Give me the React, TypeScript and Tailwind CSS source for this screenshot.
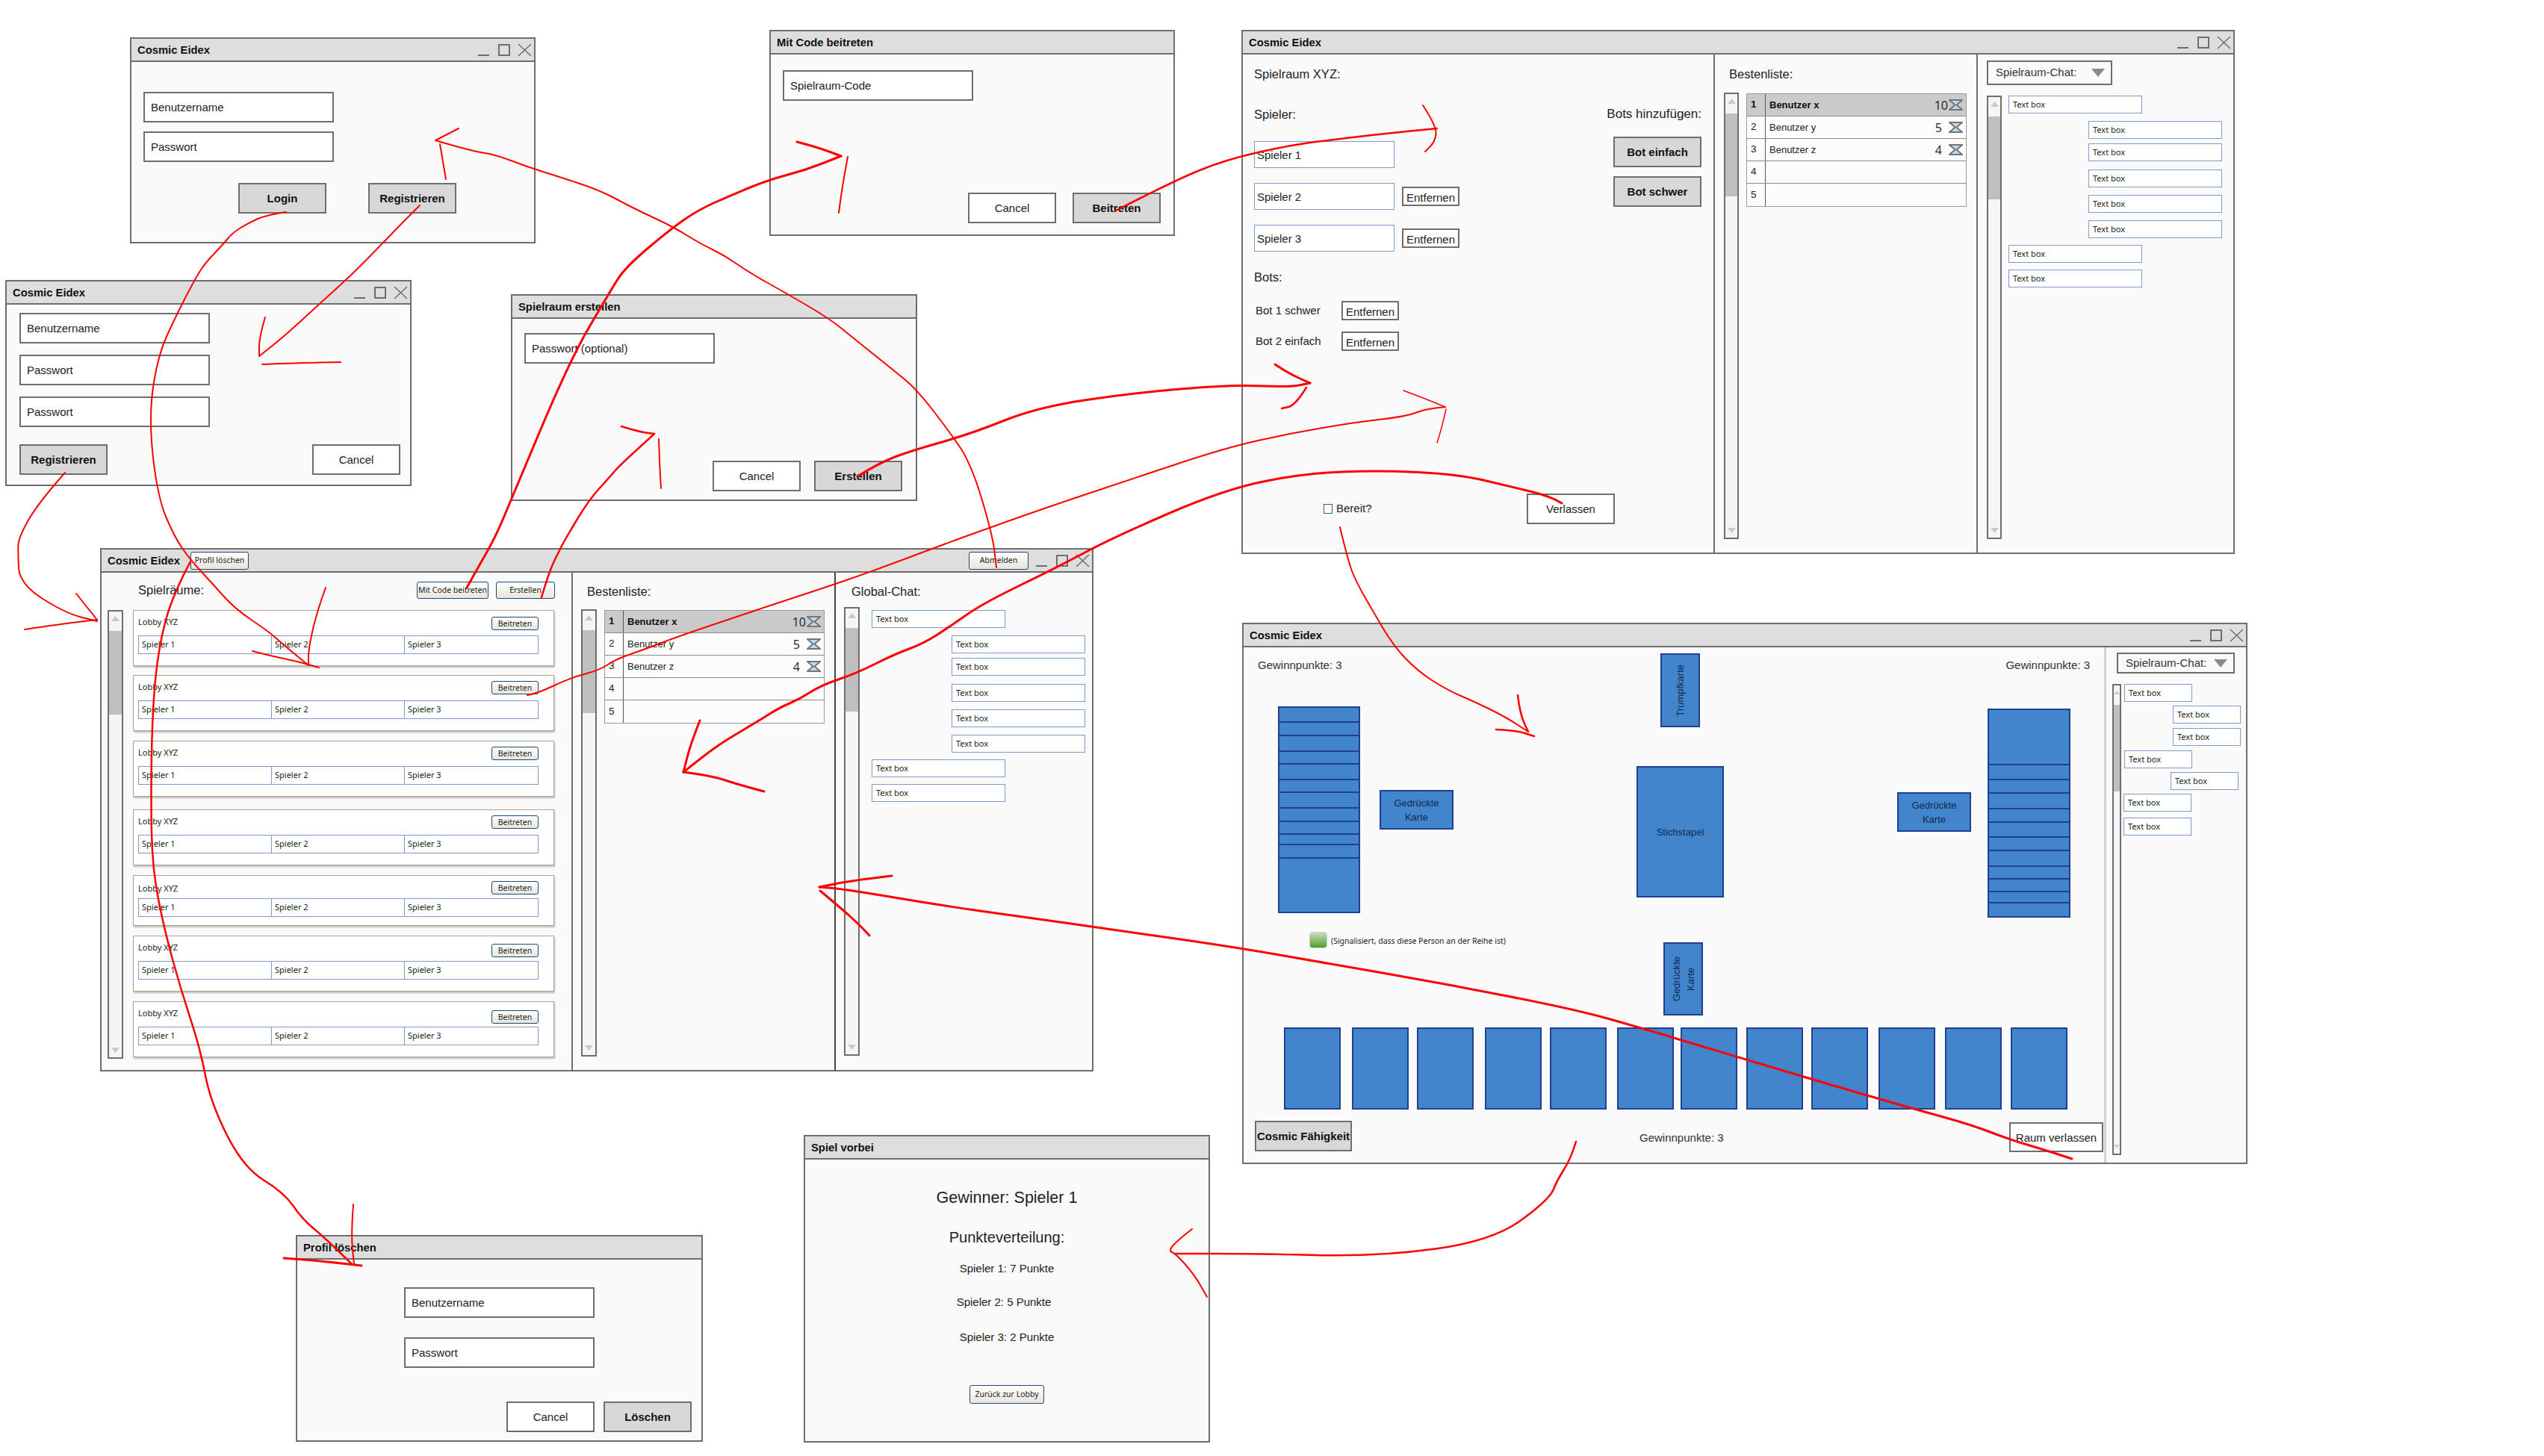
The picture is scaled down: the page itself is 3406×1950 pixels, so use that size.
import type { ReactNode } from "react";

// hand drawn red arrows, all in page pixels
const strokes: { w: number; pts: number[][] }[] = [
  { w: 2, pts: [[383, 284], [356, 288], [332, 299], [311, 312], [298, 328], [274, 353], [261, 374], [236, 422], [211, 477], [199, 560], [211, 666], [234, 720], [255, 750], [283, 780], [314, 815], [360, 846], [380, 864], [413, 891]] },
  { w: 2, pts: [[436, 787], [424, 820], [413, 869], [413, 891]] },
  { w: 2, pts: [[338, 872], [365, 879], [395, 885], [427, 894]] },
  { w: 2.5, pts: [[255, 752], [230, 799], [212, 869], [204, 953], [202, 1069], [204, 1162], [219, 1241], [242, 1325], [268, 1404], [282, 1477], [326, 1564], [380, 1597], [405, 1633], [434, 1657], [471, 1693]] },
  { w: 2, pts: [[473, 1613], [470, 1653], [474, 1693]] },
  { w: 3, pts: [[380, 1685], [421, 1688], [484, 1695]] },
  { w: 2, pts: [[562, 275], [539, 298], [514, 324], [472, 367], [431, 404], [381, 450], [347, 477]] },
  { w: 2, pts: [[355, 425], [347, 452], [347, 477]] },
  { w: 2, pts: [[351, 488], [400, 486], [456, 485]] },
  { w: 2, pts: [[87, 633], [50, 675], [25, 720], [24, 738], [26, 782], [87, 821], [130, 832]] },
  { w: 2, pts: [[102, 795], [118, 815], [130, 830]] },
  { w: 2, pts: [[33, 843], [80, 836], [130, 830]] },
  { w: 3, pts: [[625, 787], [640, 760], [663, 720], [684, 670], [763, 482], [817, 390], [837, 358], [900, 305], [937, 280], [978, 262], [1028, 241], [1078, 228], [1126, 209]] },
  { w: 3, pts: [[1067, 190], [1094, 197], [1126, 209]] },
  { w: 2, pts: [[1135, 210], [1128, 248], [1123, 285]] },
  { w: 2.5, pts: [[725, 800], [735, 766], [748, 739], [758, 720], [788, 670], [817, 638], [829, 624], [876, 581]] },
  { w: 2.5, pts: [[832, 571], [854, 578], [876, 581]] },
  { w: 2, pts: [[882, 588], [883, 620], [885, 654]] },
  { w: 2, pts: [[614, 172], [583, 188]] },
  { w: 2, pts: [[589, 193], [597, 240]] },
  { w: 2, pts: [[583, 188], [630, 202], [663, 207], [705, 223], [746, 236], [804, 255], [846, 278], [900, 303], [937, 326], [970, 342], [1003, 365], [1053, 393], [1111, 427], [1144, 454], [1194, 494], [1227, 521], [1268, 574], [1300, 620], [1329, 717], [1334, 760]] },
  { w: 3, pts: [[1148, 638], [1177, 620], [1219, 604], [1300, 581], [1390, 545], [1520, 526], [1640, 516], [1694, 517], [1729, 518], [1754, 513]] },
  { w: 3, pts: [[1707, 488], [1725, 500], [1754, 513]] },
  { w: 2.5, pts: [[1749, 519], [1734, 543], [1716, 547]] },
  { w: 2.5, pts: [[1494, 282], [1570, 243], [1640, 214], [1729, 194], [1801, 185], [1863, 178], [1924, 172]] },
  { w: 2, pts: [[1905, 141], [1924, 170], [1921, 190], [1908, 203]] },
  { w: 2, pts: [[706, 931], [719, 929], [763, 908], [804, 897], [824, 883], [865, 869], [906, 853], [1010, 818], [1052, 804], [1104, 787], [1165, 766], [1245, 736], [1288, 720], [1400, 680], [1520, 640], [1640, 600], [1729, 580], [1818, 565], [1881, 558], [1908, 548], [1935, 545]] },
  { w: 1.5, pts: [[1879, 523], [1908, 534], [1935, 545]] },
  { w: 1.5, pts: [[1936, 548], [1931, 570], [1924, 593]] },
  { w: 3, pts: [[2091, 674], [2077, 665], [2024, 652], [1952, 635], [1845, 630], [1747, 634], [1640, 655], [1490, 720], [1411, 762], [1316, 808], [1269, 841], [1236, 862], [1198, 876], [1146, 902], [1099, 918], [1071, 936], [1043, 948], [1010, 969], [962, 997], [915, 1034]] },
  { w: 3, pts: [[937, 965], [925, 995], [915, 1034]] },
  { w: 3, pts: [[915, 1034], [953, 1039], [986, 1050], [1023, 1060]] },
  { w: 2, pts: [[1794, 706], [1805, 752], [1816, 780], [1839, 820], [1865, 864], [1897, 898], [1937, 924], [1977, 941], [2017, 961], [2046, 980]] },
  { w: 2.5, pts: [[2032, 931], [2035, 956], [2046, 980]] },
  { w: 2.5, pts: [[2003, 977], [2029, 978], [2054, 986]] },
  { w: 3, pts: [[2774, 1552], [2741, 1541], [2693, 1527], [2638, 1506], [2569, 1487], [2500, 1467], [2482, 1462], [2327, 1416], [2195, 1376], [2109, 1352], [1937, 1318], [1765, 1288], [1650, 1268], [1490, 1245], [1363, 1227], [1269, 1214], [1132, 1191], [1097, 1188]] },
  { w: 3, pts: [[1194, 1173], [1142, 1179], [1097, 1188]] },
  { w: 3, pts: [[1098, 1193], [1128, 1218], [1151, 1239], [1164, 1253]] },
  { w: 2.5, pts: [[2110, 1529], [2103, 1552], [2085, 1580], [2074, 1607], [1998, 1662], [1846, 1683], [1680, 1679], [1574, 1679]] },
  { w: 2, pts: [[1596, 1646], [1578, 1660], [1564, 1675], [1574, 1679], [1599, 1707], [1616, 1737]] },
];

function smooth(pts: number[][]) {
  let d = `M${pts[0][0]} ${pts[0][1]}`;
  for (let i = 1; i < pts.length - 1; i++) {
    const mx = (pts[i][0] + pts[i + 1][0]) / 2;
    const my = (pts[i][1] + pts[i + 1][1]) / 2;
    d += ` Q${pts[i][0]} ${pts[i][1]} ${mx} ${my}`;
  }
  const last = pts[pts.length - 1];
  return d + ` L${last[0]} ${last[1]}`;
}

const WinControls = () => (
  <svg width="72" height="18" viewBox="0 0 72 18" fill="none" stroke="#6e6e6e" className="shrink-0">
    <line x1="0" y1="16" x2="15" y2="16" strokeWidth="2" />
    <rect x="28" y="2" width="14" height="14" strokeWidth="2" />
    <path d="M54 1 L71 17 M71 1 L54 17" strokeWidth="1.5" />
  </svg>
);

const Win = ({ title, className, controls, children, titleExtra }: { title: string; className: string; controls?: boolean; children: ReactNode; titleExtra?: ReactNode }) => (
  <section className={`absolute flex flex-col border-2 border-[#6e6e6e] bg-[#fafafa] ${className}`}>
    <header className="flex h-[31px] shrink-0 items-center border-b-2 border-[#6e6e6e] bg-[#dedede] pr-[3px] pl-[8px]">
      <h2 className="pt-[1px] text-[14.8px] font-bold text-[#111]">{title}</h2>
      {titleExtra}
      {controls && !titleExtra && <div className="ml-auto flex"><WinControls /></div>}
    </header>
    {children}
  </section>
);

const Field = ({ text }: { text: string }) => (
  <div className="flex h-[41px] w-[255px] items-center border-2 border-[#6e6e6e] bg-white pt-[2px] pl-[8px] text-[15px] text-[#222]">{text}</div>
);

const GrayBtn = ({ text, className = "w-[118px]" }: { text: string; className?: string }) => (
  <button className={`h-[41px] border-2 border-[#6e6e6e] bg-[#d8d8d8] pt-[2px] text-[15px] font-bold text-[#111] ${className}`}>{text}</button>
);

const PlainBtn = ({ text, className = "w-[118px] h-[41px]" }: { text: string; className?: string }) => (
  <button className={`border-2 border-[#6e6e6e] bg-white pt-[2px] text-[15px] text-[#222] ${className}`}>{text}</button>
);

const BlueBtn = ({ text, className }: { text: string; className: string }) => (
  <button className={`rounded-[3px] border border-[#1c4a78] bg-gradient-to-b from-white to-[#e8e5dc] font-['Noto_Sans'] text-[10.5px] leading-none whitespace-nowrap text-[#222] ${className}`}>{text}</button>
);

const Scrollbar = ({ className, thumb }: { className: string; thumb: string }) => (
  <div className={`flex shrink-0 flex-col border-2 border-[#6e6e6e] bg-[#f5f5f5] ${className}`}>
    <div className="flex h-[26px] shrink-0 justify-center pt-[6px]">
      <svg width="11" height="7" viewBox="0 0 11 7"><path d="M5.5 0 L11 7 L0 7 Z" fill="#c9c9c9" /></svg>
    </div>
    <div className={`shrink-0 bg-[#bfbfbf] ${thumb}`} />
    <div className="mt-auto flex justify-center pb-[6px]">
      <svg width="11" height="7" viewBox="0 0 11 7"><path d="M5.5 7 L11 0 L0 0 Z" fill="#c9c9c9" /></svg>
    </div>
  </div>
);

const Hourglass = () => (
  <svg width="19" height="15" viewBox="0 0 19 15" className="shrink-0">
    <path d="M1 1 H18 L10.5 7.5 L18 14 H1 L8.5 7.5 Z" fill="#b9dcf4" stroke="#757575" strokeWidth="2" />
  </svg>
);

const scoreRows = [
  { n: "1", name: "Benutzer x", pts: "10", top: true },
  { n: "2", name: "Benutzer y", pts: "5" },
  { n: "3", name: "Benutzer z", pts: "4" },
  { n: "4", name: "" },
  { n: "5", name: "" },
];

const ScoreTable = () => (
  <div className="h-fit w-[295px] border border-[#9a9a9a] bg-[#fcfcfc]">
    {scoreRows.map((r) => (
      <div key={r.n} className={`flex h-[30px] items-center border-b border-[#8a8a8a] text-[13px] last:border-b-0 ${r.top ? "bg-[#cacaca] font-bold text-[#111]" : "text-[#222]"}`}>
        <span className="flex h-full w-[25px] items-center border-r border-[#555] pl-[5px] text-[13.5px]">{r.n}</span>
        <span className="pl-[5px]">{r.name}</span>
        {r.pts && (
          <span className="ml-auto flex items-center gap-[1px] pr-[4px]">
            <span className={`font-['Open_Sans'] text-[16px] font-normal text-[#222] ${r.top ? "" : "pr-[8px]"}`}>{r.pts}</span>
            <Hourglass />
          </span>
        )}
      </div>
    ))}
  </div>
);

const chatLayout = [
  { right: false, gap: "mt-0" },
  { right: true, gap: "mt-[10px]" },
  { right: true, gap: "mt-[6px]" },
  { right: true, gap: "mt-[11px]" },
  { right: true, gap: "mt-[10px]" },
  { right: true, gap: "mt-[10px]" },
  { right: false, gap: "mt-[9px]" },
  { right: false, gap: "mt-[9px]" },
];

const ChatBox = ({ className }: { className: string }) => (
  <div className={`flex h-[24px] items-center border border-[#7f9cc9] bg-white pl-[5px] font-['Noto_Sans'] text-[11px] text-[#222] ${className}`}>Text box</div>
);

const ChatList = ({ className }: { className: string }) => (
  <div className={`flex flex-col ${className}`}>
    {chatLayout.map((c, i) => (
      <ChatBox key={i} className={`w-[179px] ${c.gap} ${c.right ? "ml-[107px]" : ""}`} />
    ))}
  </div>
);

const ChatSelect = ({ className }: { className: string }) => (
  <div className={`flex items-center justify-between border-2 border-[#6e6e6e] bg-[#fafafa] pr-[8px] pl-[10px] text-[15px] text-[#333] ${className}`}>
    Spielraum-Chat:
    <svg width="18" height="11" viewBox="0 0 18 11"><path d="M0 0 H18 L9 11 Z" fill="#8a8a8a" /></svg>
  </div>
);

const lobbies = [
  { gap: "", label: "", btn: "mt-[1px]", compact: false },
  { gap: "mt-[12px]", label: "", btn: "", compact: false },
  { gap: "mt-[13px]", label: "", btn: "", compact: false },
  { gap: "mt-[17px]", label: "", btn: "", compact: false },
  { gap: "mt-[13px]", label: "mt-[2px]", btn: "", compact: true },
  { gap: "mt-[13px]", label: "", btn: "mt-[3px]", compact: false },
  { gap: "mt-[13px]", label: "", btn: "mt-[4px]", compact: false },
];

const LobbyCard = ({ gap, label, btn, compact }: { gap: string; label: string; btn: string; compact: boolean }) => (
  <div className={`w-[564px] border border-[#aaa493] bg-white pr-[20px] pl-[6px] font-['Noto_Sans'] text-[11px] text-[#222] shadow-[1px_2px_2px_rgba(0,0,0,0.25)] ${gap} ${compact ? "h-[68px]" : "h-[75px]"}`}>
    <div className={`flex items-start justify-between pt-[7px] ${compact ? "h-[30px]" : "h-[33px]"}`}>
      <span className={label}>Lobby XYZ</span>
      <BlueBtn text="Beitreten" className={`h-[18px] w-[63px] ${btn}`} />
    </div>
    <div className="grid h-[25px] grid-cols-3 border border-[#7f9cc9]">
      {["Spieler 1", "Spieler 2", "Spieler 3"].map((s) => (
        <span key={s} className="flex items-center border-r border-[#7f9cc9] pl-[4px] last:border-r-0">{s}</span>
      ))}
    </div>
  </div>
);

const Card = ({ className, children }: { className: string; children?: ReactNode }) => (
  <div className={`absolute flex items-center justify-center border-2 border-[#1f3f8f] bg-[#4285cc] text-center text-[13px] leading-[19px] text-[#0f2a50] ${className}`}>{children}</div>
);

const Stack = ({ className, rows }: { className: string; rows: string[] }) => (
  <div className={`absolute flex flex-col border-2 border-[#1f3f8f] bg-[#4285cc] ${className}`}>
    {rows.map((h, i) => (
      <div key={i} className={`border-b-2 border-[#1f3f8f] last:border-b-0 ${h}`} />
    ))}
  </div>
);

const leftStack = ["h-[20px]", "h-[18px]", "h-[21px]", "h-[17px]", "h-[21px]", "h-[17px]", "h-[21px]", "h-[18px]", "h-[17px]", "h-[14px]", "h-[18px]", "h-[71px]"];
const rightStack = ["h-[74px]", "h-[20px]", "h-[18px]", "h-[21px]", "h-[18px]", "h-[20px]", "h-[18px]", "h-[21px]", "h-[17px]", "h-[17px]", "h-[15px]", "h-[17px]"];
const handGaps = ["", "ml-[15px]", "ml-[11px]", "ml-[15px]", "ml-[11px]", "ml-[14px]", "ml-[9px]", "ml-[12px]", "ml-[11px]", "ml-[14px]", "ml-[13px]", "ml-[12px]"];

export default function App() {
  return (
    <div className="relative h-[1950px] w-[3406px] overflow-hidden bg-white font-['Liberation_Sans',sans-serif]">
      {/* Login */}
      <Win title="Cosmic Eidex" controls className="top-[50px] left-[174px] h-[276px] w-[543px]">
        <div className="pt-[40px] pl-[16px]">
          <div className="flex flex-col gap-[12px]">
            <Field text="Benutzername" />
            <Field text="Passwort" />
          </div>
          <div className="mt-[28px] ml-[127px] flex gap-[56px]">
            <GrayBtn text="Login" />
            <GrayBtn text="Registrieren" />
          </div>
        </div>
      </Win>

      {/* Registrieren */}
      <Win title="Cosmic Eidex" controls className="top-[375px] left-[7px] h-[276px] w-[544px]">
        <div className="pt-[11px] pr-[13px] pl-[17px]">
          <div className="flex flex-col gap-[15px]">
            <Field text="Benutzername" />
            <Field text="Passwort" />
            <Field text="Passwort" />
          </div>
          <div className="mt-[23px] flex justify-between">
            <GrayBtn text="Registrieren" />
            <PlainBtn text="Cancel" />
          </div>
        </div>
      </Win>

      {/* Mit Code */}
      <Win title="Mit Code beitreten" className="top-[40px] left-[1030px] h-[276px] w-[543px]">
        <div className="flex flex-1 flex-col pt-[21px] pr-[17px] pb-[15px] pl-[16px]">
          <Field text="Spielraum-Code" />
          <div className="mt-auto flex justify-end gap-[22px]">
            <PlainBtn text="Cancel" />
            <GrayBtn text="Beitreten" />
          </div>
        </div>
      </Win>

      {/* Spielraum erstellen */}
      <Win title="Spielraum erstellen" className="top-[394px] left-[684px] h-[277px] w-[544px]">
        <div className="flex flex-1 flex-col pt-[19px] pr-[18px] pb-[11px] pl-[16px]">
          <Field text="Passwort (optional)" />
          <div className="mt-auto flex justify-end gap-[18px]">
            <PlainBtn text="Cancel" />
            <GrayBtn text="Erstellen" />
          </div>
        </div>
      </Win>

      {/* Spielraum */}
      <Win title="Cosmic Eidex" controls className="top-[40px] left-[1662px] h-[702px] w-[1330px]">
        <div className="flex flex-1">
          <div className="flex w-[632px] flex-col border-r-2 border-[#6e6e6e] pt-[16px] pb-[38px] pl-[15px] text-[16.5px] text-[#222]">
            <p className="h-[20px] leading-[20px]">Spielraum XYZ:</p>
            <div className="mt-[34px] flex justify-between pr-[16px]">
              <div>
                <p className="h-[20px] leading-[20px]">Spieler:</p>
                <div className="mt-[26px] flex flex-col gap-[20px] text-[15px]">
                  {["Spieler 1", "Spieler 2", "Spieler 3"].map((s, i) => (
                    <div key={s} className="flex items-center gap-[10px]">
                      <div className="flex h-[36px] w-[188px] items-center border border-[#7f9cc9] bg-white pt-[2px] pl-[3px]">{s}</div>
                      {i > 0 && <PlainBtn text="Entfernen" className="h-[26px] w-[77px]" />}
                    </div>
                  ))}
                </div>
                <p className="mt-[24px] h-[20px] leading-[20px]">Bots:</p>
                <div className="mt-[22px] flex flex-col gap-[15px] text-[15px]">
                  {["Bot 1 schwer", "Bot 2 einfach"].map((b) => (
                    <div key={b} className="flex items-center pl-[2px]">
                      <span className="w-[115px]">{b}</span>
                      <PlainBtn text="Entfernen" className="h-[26px] w-[77px]" />
                    </div>
                  ))}
                </div>
              </div>
              <div className="flex flex-col items-end">
                <p className="h-[20px] text-[17px] leading-[20px]">Bots hinzufügen:</p>
                <div className="mt-[20px] flex flex-col gap-[12px]">
                  <GrayBtn text="Bot einfach" />
                  <GrayBtn text="Bot schwer" />
                </div>
              </div>
            </div>
            <div className="mt-auto flex items-center pl-[93px]">
              <div className="flex w-[272px] items-center gap-[5px] text-[15px]">
                <span className="h-[13px] w-[12px] border border-[#2f5f9f] bg-white" />
                Bereit?
              </div>
              <PlainBtn text="Verlassen" />
            </div>
          </div>
          <div className="flex w-[352px] flex-col border-r-2 border-[#6e6e6e] pt-[16px] pl-[12px]">
            <p className="ml-[7px] h-[20px] text-[16.5px] leading-[20px] text-[#222]">Bestenliste:</p>
            <div className="mt-[15px] flex gap-[10px]">
              <Scrollbar className="h-[598px] w-[20px]" thumb="h-[111px]" />
              <div className="mt-[1px]"><ScoreTable /></div>
            </div>
          </div>
          <div className="flex flex-1 flex-col pt-[8px] pl-[12px]">
            <ChatSelect className="h-[33px] w-[168px]" />
            <div className="mt-[14px] flex gap-[9px]">
              <Scrollbar className="h-[594px] w-[20px]" thumb="h-[111px]" />
              <ChatList className="" />
            </div>
          </div>
        </div>
      </Win>

      {/* Lobby */}
      <Win
        title="Cosmic Eidex"
        className="top-[734px] left-[134px] h-[701px] w-[1330px]"
        titleExtra={
          <>
            <BlueBtn text="Profil löschen" className="ml-[14px] h-[24px] w-[78px]" />
            <BlueBtn text="Abmelden" className="mr-[10px] ml-auto h-[24px] w-[80px]" />
            <WinControls />
          </>
        }
      >
        <div className="flex flex-1">
          <div className="w-[631px] border-r-2 border-[#6e6e6e] pt-[12px] pl-[8px]">
            <div className="ml-[41px] flex h-[23px] items-center justify-between pr-[22px]">
              <span className="text-[16.5px] text-[#222]">Spielräume:</span>
              <div className="flex gap-[10px]">
                <BlueBtn text="Mit Code beitreten" className="h-[23px] w-[96px]" />
                <BlueBtn text="Erstellen" className="h-[23px] w-[79px]" />
              </div>
            </div>
            <div className="mt-[15px] flex gap-[13px]">
              <Scrollbar className="h-[601px] w-[21px]" thumb="h-[112px]" />
              <div>
                {lobbies.map((l, i) => (
                  <LobbyCard key={i} {...l} />
                ))}
              </div>
            </div>
          </div>
          <div className="w-[352px] border-r-2 border-[#444] pt-[15px] pl-[11px]">
            <p className="ml-[8px] h-[20px] text-[16.5px] leading-[20px] text-[#222]">Bestenliste:</p>
            <div className="mt-[14px] flex gap-[10px]">
              <Scrollbar className="h-[599px] w-[21px]" thumb="h-[111px]" />
              <div className="mt-[1px]"><ScoreTable /></div>
            </div>
          </div>
          <div className="flex-1 pt-[15px] pl-[11px]">
            <p className="ml-[10px] h-[20px] text-[16.5px] leading-[20px] text-[#222]">Global-Chat:</p>
            <div className="mt-[11px] flex gap-[16px]">
              <Scrollbar className="h-[601px] w-[21px]" thumb="h-[112px]" />
              <ChatList className="mt-[4px]" />
            </div>
          </div>
        </div>
      </Win>

      {/* Spiel */}
      <Win title="Cosmic Eidex" controls className="top-[834px] left-[1663px] h-[725px] w-[1346px]">
        <div className="flex flex-1">
          <div className="relative w-[1155px] border-r-[3px] border-[#d4d2cc] text-[15px] text-[#333]">
            <span className="absolute top-[13px] left-[19px]">Gewinnpunkte: 3</span>
            <span className="absolute top-[13px] right-[19px]">Gewinnpunkte: 3</span>
            <Card className="top-[8px] left-[558px] h-[99px] w-[53px]">
              <span className="rotate-180 [writing-mode:vertical-rl]">Trumpfkarte</span>
            </Card>
            <Stack className="top-[79px] left-[46px] w-[110px]" rows={leftStack} />
            <Card className="top-[191px] left-[182px] h-[53px] w-[99px]">Gedrückte<br />Karte</Card>
            <Card className="top-[159px] left-[526px] h-[176px] w-[117px]">Stichstapel</Card>
            <Card className="top-[194px] left-[875px] h-[53px] w-[99px]">Gedrückte<br />Karte</Card>
            <Stack className="top-[82px] left-[996px] w-[111px]" rows={rightStack} />
            <span className="absolute top-[381px] left-[88px] h-[22px] w-[24px] rounded-[4px] border border-[#cfcfcf] bg-gradient-to-b from-[#c9dcba] to-[#4f9e1f]" />
            <span className="absolute top-[386px] left-[117px] font-['Noto_Sans'] text-[10.5px] leading-[14px] text-[#222]">(Signalisiert, dass diese Person an der Reihe ist)</span>
            <Card className="top-[395px] left-[562px] h-[98px] w-[53px]">
              <span className="rotate-180 [writing-mode:vertical-rl]">Gedrückte<br />Karte</span>
            </Card>
            <div className="absolute top-[509px] left-[54px] flex">
              {handGaps.map((g, i) => (
                <div key={i} className={`h-[110px] w-[76px] border-2 border-[#1f3f8f] bg-[#4285cc] ${g}`} />
              ))}
            </div>
            <GrayBtn text="Cosmic Fähigkeit" className="absolute top-[634px] left-[15px] w-[130px]" />
            <span className="absolute top-[646px] left-[530px]">Gewinnpunkte: 3</span>
            <PlainBtn text="Raum verlassen" className="absolute top-[636px] left-[1025px] h-[40px] w-[126px]" />
          </div>
          <div className="flex flex-1 flex-col pt-[7px] pl-[8px]">
            <ChatSelect className="ml-[6px] h-[28px] w-[158px]" />
            <div className="mt-[14px] flex gap-[4px]">
              <Scrollbar className="h-[631px] w-[12px]" thumb="h-[116px]" />
              <div className="flex flex-col">
                <ChatBox className="w-[91px]" />
                <ChatBox className="mt-[5px] ml-[65px] w-[91px]" />
                <ChatBox className="mt-[6px] ml-[65px] w-[91px]" />
                <ChatBox className="mt-[6px] w-[91px]" />
                <ChatBox className="mt-[5px] ml-[62px] w-[91px]" />
                <ChatBox className="mt-[5px] -ml-[1px] w-[91px]" />
                <ChatBox className="mt-[8px] -ml-[1px] w-[91px]" />
              </div>
            </div>
          </div>
        </div>
      </Win>

      {/* Spiel vorbei */}
      <Win title="Spiel vorbei" className="top-[1520px] left-[1076px] h-[412px] w-[544px]">
        <div className="flex flex-col items-center pt-[38px] text-[#222]">
          <p className="text-[21.5px] leading-[26px]">Gewinner: Spieler 1</p>
          <p className="mt-[27px] text-[20px] leading-[26px]">Punkteverteilung:</p>
          <p className="mt-[19px] text-[15px] leading-[20px]">Spieler 1: 7 Punkte</p>
          <p className="mt-[25px] pr-[8px] text-[15px] leading-[20px]">Spieler 2: 5 Punkte</p>
          <p className="mt-[27px] text-[15px] leading-[20px]">Spieler 3: 2 Punkte</p>
          <BlueBtn text="Zurück zur Lobby" className="mt-[54px] h-[25px] w-[100px]" />
        </div>
      </Win>

      {/* Profil löschen */}
      <Win title="Profil löschen" className="top-[1654px] left-[396px] h-[277px] w-[545px]">
        <div className="flex flex-1 flex-col pt-[37px] pr-[13px] pb-[11px]">
          <div className="ml-[143px] flex flex-col gap-[26px]">
            <Field text="Benutzername" />
            <Field text="Passwort" />
          </div>
          <div className="mt-auto flex justify-end gap-[12px]">
            <PlainBtn text="Cancel" />
            <GrayBtn text="Löschen" />
          </div>
        </div>
      </Win>

      {/* Pfeile */}
      <svg className="pointer-events-none absolute top-0 left-0" width="3406" height="1950" viewBox="0 0 3406 1950" fill="none" stroke="#ff0000" strokeLinecap="round" strokeLinejoin="round">
        {strokes.map((s, i) => (
          <path key={i} d={smooth(s.pts)} strokeWidth={s.w} />
        ))}
      </svg>
    </div>
  );
}
